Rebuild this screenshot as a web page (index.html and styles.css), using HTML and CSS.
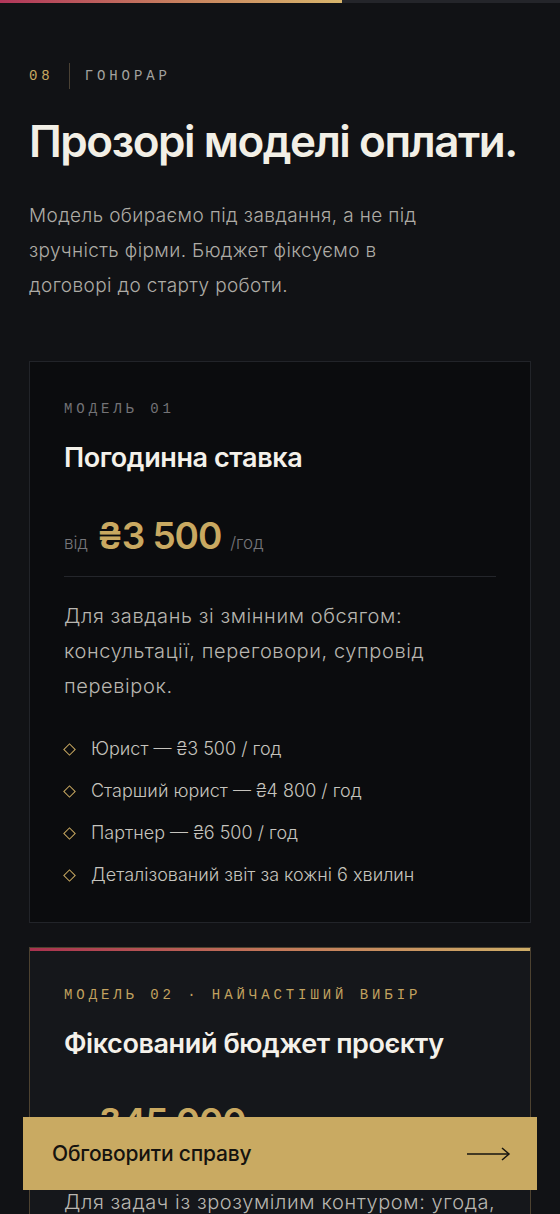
FILE: index.html
```html
<!DOCTYPE html>
<html lang="uk">
<head>
  <meta charset="UTF-8" />
  <meta name="viewport" content="width=device-width, initial-scale=1.0" />
  <title>Гонорар — моделі оплати</title>
  <link rel="stylesheet" href="styles.css">
</head>
<body>
  <div class="progress"><div class="progress-fill" style="width: 61%;"></div></div>

  <main class="fees">
    <div class="eyebrow">
      <span class="eyebrow-num">08</span>
      <span class="eyebrow-line"></span>
      <span class="eyebrow-name">Гонорар</span>
    </div>

    <h1>Прозорі моделі оплати.</h1>
    <p class="lead">Модель обираємо під завдання, а не під зручність фірми. Бюджет фіксуємо в договорі до старту роботи.</p>

    <div class="plans">
      <article class="plan">
        <div class="plan-label">Модель 01</div>
        <h2>Погодинна ставка</h2>
        <div class="price">
          <span class="price-from">від</span>
          <span class="price-value">₴3 500</span>
          <span class="price-unit">/год</span>
        </div>
        <p class="plan-text">Для завдань зі змінним обсягом: консультації, переговори, супровід перевірок.</p>
        <ul class="plan-list">
          <li>Юрист — ₴3 500 / год</li>
          <li>Старший юрист — ₴4 800 / год</li>
          <li>Партнер — ₴6 500 / год</li>
          <li>Деталізований звіт за кожні 6 хвилин</li>
        </ul>
      </article>

      <article class="plan plan-featured">
        <div class="plan-label">Модель 02 · Найчастіший вибір</div>
        <h2>Фіксований бюджет проєкту</h2>
        <div class="price">
          <span class="price-from">від</span>
          <span class="price-value">₴45 000</span>
          <span class="price-unit">/проєкт</span>
        </div>
        <p class="plan-text">Для задач із зрозумілим контуром: угода, реєстрація, due diligence, договірна робота.</p>
        <ul class="plan-list">
          <li>Ціна не змінюється до завершення</li>
          <li>Оплата етапами за результатом</li>
          <li>Без прихованих витрат</li>
        </ul>
      </article>
    </div>
  </main>

  <a class="cta" href="#contact">
    <span>Обговорити справу</span>
    <svg width="44" height="14" viewBox="0 0 44 14" fill="none" stroke="currentColor" stroke-width="1.5">
      <path d="M0 7h42" />
      <path d="M35 1l7 6-7 6" />
    </svg>
  </a>
</body>
</html>
```

FILE: styles.css
```css
* {
  margin: 0;
  padding: 0;
  box-sizing: border-box;
}

body {
  background: #111215;
  color: #f2efe7;
  font-family: 'Inter', 'Noto Sans', sans-serif;
}

/* scroll progress */
.progress {
  position: fixed;
  top: 0;
  left: 0;
  right: 0;
  height: 3px;
  background: #24252a;
  z-index: 10;
}

.progress-fill {
  height: 100%;
  background: linear-gradient(90deg, #b1365a, #c9845f 55%, #d8b56c);
}

.fees {
  padding: 63px 29px 160px;
}

.eyebrow {
  display: flex;
  align-items: center;
  gap: 15px;
  height: 26px;
  font-family: 'Liberation Mono', monospace;
  font-size: 14px;
  letter-spacing: 0.28em;
  text-transform: uppercase;
}

.eyebrow-num {
  color: #c9a961;
}

.eyebrow-line {
  width: 1px;
  height: 26px;
  background: #4a4134;
}

.eyebrow-name {
  color: #a3a29f;
}

h1 {
  margin-top: 28px;
  font-size: 44px;
  line-height: 1.1;
  font-weight: 600;
  letter-spacing: -0.033em;
  color: #f2efe6;
}

.lead {
  margin-top: 33px;
  max-width: 400px;
  font-size: 19px;
  line-height: 35px;
  font-weight: 300;
  letter-spacing: 0.02em;
  color: #aeaca6;
}

.plans {
  margin-top: 58px;
  display: flex;
  flex-direction: column;
  gap: 24px;
}

.plan {
  position: relative;
  background: #0b0c0e;
  border: 1px solid #222429;
  padding: 37px 34px 33px;
}

.plan-label {
  font-family: 'Liberation Mono', monospace;
  font-size: 14px;
  line-height: 20px;
  letter-spacing: 0.28em;
  text-transform: uppercase;
  color: #737376;
}

.plan h2 {
  margin-top: 22px;
  font-size: 27px;
  line-height: 1.25;
  font-weight: 600;
  letter-spacing: -0.015em;
  color: #f4f1ea;
}

.price {
  margin-top: 42px;
  display: flex;
  align-items: baseline;
  gap: 9px;
  padding-bottom: 22px;
  border-bottom: 1px solid #24262b;
}

.price-from,
.price-unit {
  font-size: 17px;
  font-weight: 300;
  color: #76767a;
}

.price-value {
  font-size: 37px;
  line-height: 1;
  font-weight: 600;
  letter-spacing: -0.03em;
  color: #c9a961;
}

.plan-text {
  margin-top: 22px;
  font-size: 20px;
  line-height: 35px;
  font-weight: 300;
  letter-spacing: 0.03em;
  color: #b8b6b0;
}

.plan-list {
  margin-top: 31px;
  list-style: none;
  display: flex;
  flex-direction: column;
  gap: 14px;
}

.plan-list li {
  display: flex;
  align-items: center;
  gap: 17px;
  font-size: 18px;
  line-height: 28px;
  font-weight: 300;
  color: #c6c4be;
}

.plan-list li::before {
  content: "";
  flex: none;
  width: 7px;
  height: 7px;
  margin-left: 1px;
  border: 1.5px solid #c9a961;
  transform: rotate(45deg);
}

/* featured card */
.plan-featured {
  background: #15171b;
  border-color: #4d4230;
}

.plan-featured::before {
  content: "";
  position: absolute;
  top: 0;
  left: 0;
  right: 0;
  height: 3px;
  background: linear-gradient(90deg, #a9324f, #c47a5a 50%, #cfae68);
}

.plan-featured .plan-label {
  color: #c2a25f;
}

/* sticky call to action */
.cta {
  position: fixed;
  left: 23px;
  right: 23px;
  bottom: 24px;
  height: 73px;
  display: flex;
  align-items: center;
  justify-content: space-between;
  padding: 0 26px 0 29px;
  background: #c9aa62;
  color: #15130f;
  font-size: 21px;
  font-weight: 500;
  letter-spacing: -0.01em;
  text-decoration: none;
}
```
